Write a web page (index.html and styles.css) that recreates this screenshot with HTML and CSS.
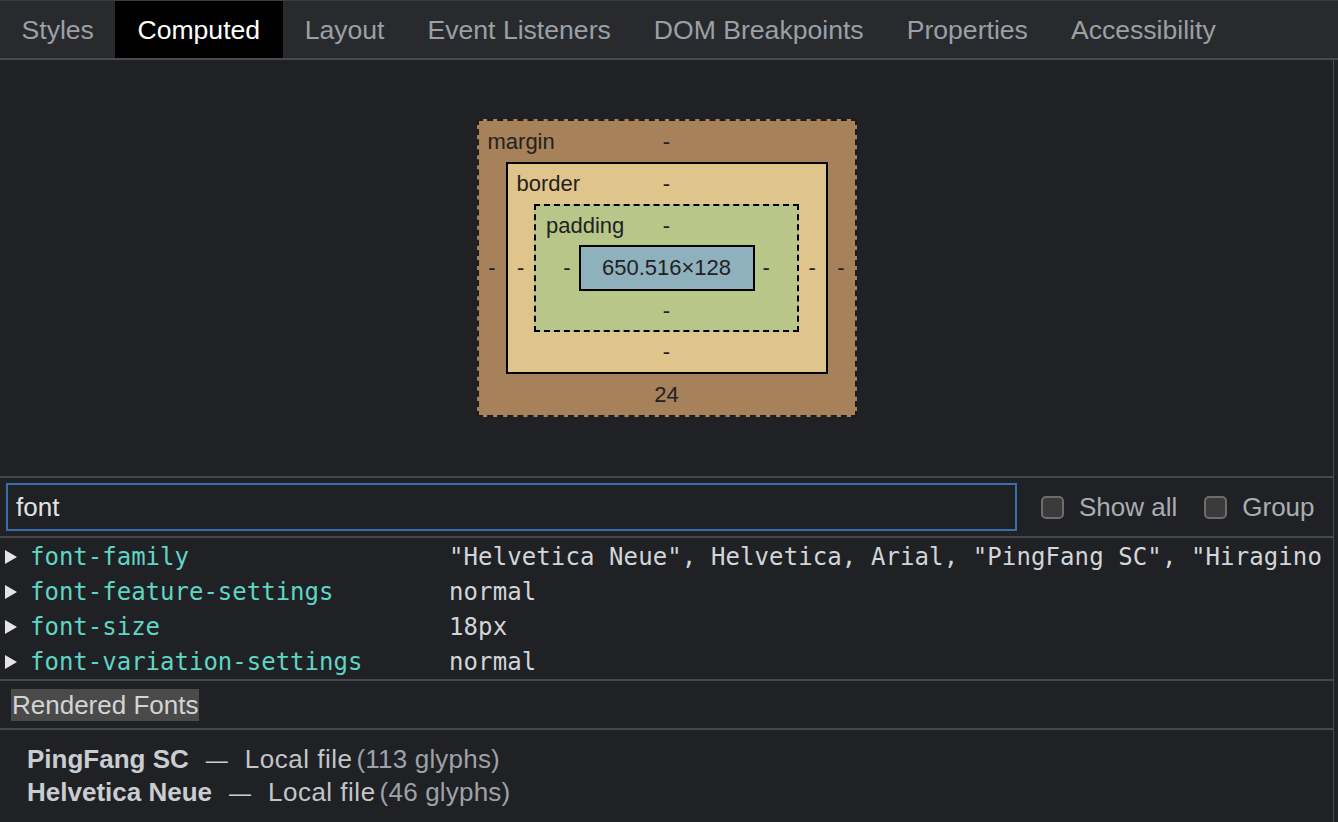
FILE: index.html
```html
<!DOCTYPE html>
<html lang="en">
<head>
<meta charset="utf-8">
<title>Computed</title>
<link rel="stylesheet" href="styles.css">
</head>
<body>
<div class="devtools">
  <div class="tabbar">
    <div class="tab">Styles</div>
    <div class="tab active">Computed</div>
    <div class="tab">Layout</div>
    <div class="tab">Event Listeners</div>
    <div class="tab">DOM Breakpoints</div>
    <div class="tab">Properties</div>
    <div class="tab">Accessibility</div>
  </div>
  <div class="panel">
    <div class="bm-wrap">
      <div class="bm-box bm-margin">
        <div class="bm-row bm-top"><span class="bm-label">margin</span><span>-</span><span></span></div>
        <div class="bm-mid">
          <div class="bm-side">-</div>
          <div class="bm-box bm-border">
            <div class="bm-row bm-top"><span class="bm-label">border</span><span>-</span><span></span></div>
            <div class="bm-mid">
              <div class="bm-side">-</div>
              <div class="bm-box bm-padding">
                <div class="bm-row bm-top pad-top"><span class="bm-label">padding</span><span>-</span><span></span></div>
                <div class="bm-mid bm-mid-content">
                  <span class="bm-dash">-</span>
                  <div class="bm-content">650.516×128</div>
                  <span class="bm-dash">-</span>
                </div>
                <div class="bm-row bm-bottom pad-bottom">-</div>
              </div>
              <div class="bm-side">-</div>
            </div>
            <div class="bm-row bm-bottom">-</div>
          </div>
          <div class="bm-side">-</div>
        </div>
        <div class="bm-row bm-bottom">24</div>
      </div>
    </div>

    <div class="filter-bar">
      <div class="filter-input">font</div>
      <label class="check"><span class="box"></span><span>Show all</span></label>
      <label class="check"><span class="box"></span><span>Group</span></label>
    </div>

    <div class="props">
      <div class="prop">
        <span class="tri"><svg width="12" height="14" viewBox="0 0 12 14"><polygon points="0,0 12,7 0,14" fill="#e4e4e4"/></svg></span>
        <span class="pname">font-family</span>
        <span class="pval">"Helvetica Neue", Helvetica, Arial, "PingFang SC", "Hiragino Sans GB", "Heiti SC", "Microsoft YaHei", sans-serif</span>
      </div>
      <div class="prop">
        <span class="tri"><svg width="12" height="14" viewBox="0 0 12 14"><polygon points="0,0 12,7 0,14" fill="#e4e4e4"/></svg></span>
        <span class="pname">font-feature-settings</span>
        <span class="pval">normal</span>
      </div>
      <div class="prop">
        <span class="tri"><svg width="12" height="14" viewBox="0 0 12 14"><polygon points="0,0 12,7 0,14" fill="#e4e4e4"/></svg></span>
        <span class="pname">font-size</span>
        <span class="pval">18px</span>
      </div>
      <div class="prop">
        <span class="tri"><svg width="12" height="14" viewBox="0 0 12 14"><polygon points="0,0 12,7 0,14" fill="#e4e4e4"/></svg></span>
        <span class="pname">font-variation-settings</span>
        <span class="pval">normal</span>
      </div>
    </div>

    <div class="rendered-head"><span class="rh-title">Rendered Fonts</span></div>

    <div class="fonts-list">
      <div class="font-line"><span class="fname">PingFang SC</span><span class="fdash">—</span><span class="fsrc">Local file</span><span class="fcount">(113 glyphs)</span></div>
      <div class="font-line"><span class="fname">Helvetica Neue</span><span class="fdash">—</span><span class="fsrc">Local file</span><span class="fcount">(46 glyphs)</span></div>
    </div>
  </div>
</div>
</body>
</html>
```

FILE: styles.css
```css
html, body {
  margin: 0;
  padding: 0;
  background: #202124;
}
body {
  width: 1338px;
  height: 822px;
  overflow: hidden;
  font-family: "Liberation Sans", Arial, sans-serif;
}
.devtools {
  display: flex;
  flex-direction: column;
  height: 822px;
}
.tabbar {
  display: flex;
  height: 57px;
  background: #292a2d;
  border-top: 1px solid #3c3d41;
  border-bottom: 2px solid #47494c;
}
.tab {
  padding: 1px 21.5px 0;
  line-height: 56px;
  font-size: 26.6px;
  color: #9aa0a6;
  white-space: nowrap;
}
.tab.active {
  background: #000;
  color: #fff;
  padding: 1px 23px 0 22px;
}
.panel {
  width: 1333px;
  flex: 1;
  border-right: 1px solid #47494c;
  display: flex;
  flex-direction: column;
}

/* box model */
.bm-wrap {
  height: 416px;
  display: flex;
  align-items: center;
  justify-content: center;
}
.bm-box {
  box-sizing: border-box;
  display: flex;
  flex-direction: column;
  color: #222;
  font-size: 22px;
}
.bm-margin {
  width: 380px;
  height: 298px;
  background: #a68159;
  border: 2px dashed #1c1c1c;
}
.bm-border {
  width: 322px;
  height: 212px;
  background: #dfc48c;
  border: 2px solid #000;
}
.bm-padding {
  width: 265px;
  height: 128px;
  background: #b8c68a;
  border: 2px dashed #000;
}
.bm-content {
  box-sizing: border-box;
  width: 176px;
  height: 46px;
  background: #8fb0bd;
  border: 2px solid #000;
  display: flex;
  align-items: center;
  justify-content: center;
}
.bm-row {
  height: 41px;
  display: grid;
  align-items: center;
}
.bm-top {
  grid-template-columns: 1fr auto 1fr;
  padding: 0 9px;
}
.bm-border > .bm-row { height: 40px; }
.pad-top, .pad-bottom { height: 39px !important; }
.pad-top { padding: 0 10px; }
.bm-label { justify-self: start; }
.bm-bottom {
  justify-items: center;
}
.bm-mid {
  flex: 1;
  display: flex;
  align-items: center;
}
.bm-side {
  flex: 1;
  text-align: center;
}
.bm-mid-content {
  justify-content: center;
}
.bm-dash {
  margin: 0 8px;
}

/* filter bar */
.filter-bar {
  height: 62px;
  box-sizing: border-box;
  border-top: 2px solid #45474b;
  border-bottom: 2px solid #45474b;
  display: flex;
  align-items: center;
  padding-left: 6px;
}
.filter-input {
  box-sizing: border-box;
  width: 1011px;
  height: 48px;
  border: 2px solid #3a6db0;
  padding-left: 8px;
  font-size: 26px;
  line-height: 44px;
  color: #e3e3e3;
}
.check {
  display: flex;
  align-items: center;
  font-size: 26px;
  color: #a9adb2;
  margin-left: 24px;
}
.check + .check { margin-left: 27px; }
.check .box {
  box-sizing: border-box;
  width: 23px;
  height: 23px;
  border: 2px solid #6d6d6d;
  background: #3b3b3b;
  border-radius: 5px;
  margin-right: 15px;
}

/* properties */
.props {
  padding-top: 1px;
}
.prop {
  height: 35px;
  display: grid;
  grid-template-columns: 30px 419px 1fr;
  align-items: center;
  font-family: "DejaVu Sans Mono", "Liberation Mono", monospace;
  font-size: 24px;
}
.tri {
  padding-left: 5px;
  display: flex;
  align-items: center;
}
.pname {
  color: #5fd5c4;
  white-space: nowrap;
}
.pval {
  color: #d2d5d9;
  white-space: nowrap;
  overflow: hidden;
  letter-spacing: 0.1px;
  margin-right: 6px;
}

/* rendered fonts */
.rendered-head {
  height: 51px;
  box-sizing: border-box;
  border-top: 2px solid #45474b;
  border-bottom: 2px solid #45474b;
  display: flex;
  align-items: center;
  padding-left: 11px;
}
.rh-title {
  background: #4a4a4a;
  color: #d4d4d4;
  font-size: 26px;
  line-height: 32px;
  padding: 0 1px;
}
.fonts-list {
  padding: 13px 0 0 27px;
}
.font-line {
  height: 33px;
  line-height: 33px;
  font-size: 26px;
  white-space: nowrap;
}
.fname {
  font-weight: bold;
  color: #c9cdd2;
}
.fdash {
  color: #c9cdd2;
  margin: 0 17px;
  font-size: 22px;
}
.fsrc {
  color: #c2c6cb;
  letter-spacing: 0.5px;
  margin-right: 4px;
}
.fcount {
  color: #9ea2a8;
  letter-spacing: 0.2px;
}
```
